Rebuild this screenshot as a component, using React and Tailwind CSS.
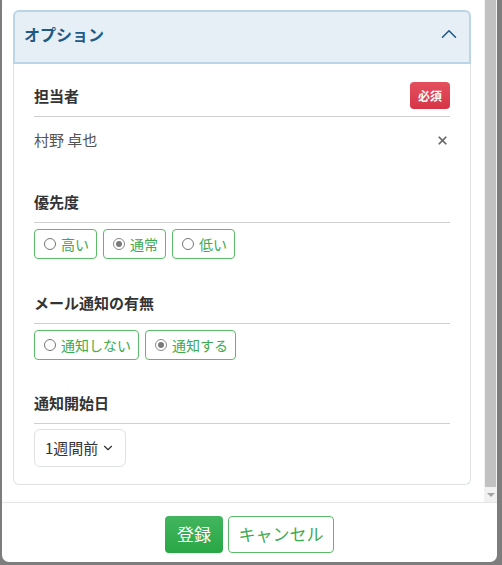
import { ChevronUp, ChevronDown, X } from "lucide-react";

const jp = { fontFamily: '"Noto Sans CJK JP", "Noto Sans", sans-serif' };

function Radio({ checked }) {
  return (
    <span
      className={`w-[12px] h-[12px] rounded-full border flex items-center justify-center bg-white ${
        checked ? "border-[#8a8a8a]" : "border-[#767676]"
      }`}
    >
      {checked && <span className="w-[6px] h-[6px] rounded-full bg-[#7a7a7a]" />}
    </span>
  );
}

function Choice({ label, checked }) {
  return (
    <label className="h-[30px] flex items-center gap-[5px] pl-[9px] pr-[7px] border-[1.5px] border-[#5bbb68] rounded-[4px] text-[14px] text-[#3daa4f] leading-none">
      <Radio checked={checked} />
      <span>{label}</span>
    </label>
  );
}

function SectionLabel({ children, badge }) {
  return (
    <div className="pb-[7px] border-b border-[#cfcfcf]">
      <div className="h-[27px] flex items-center justify-between">
        <span className="text-[15px] font-bold text-[#333] leading-none -mt-[1px]">{children}</span>
        {badge && (
          <span className="h-[27px] w-[40px] rounded-[4px] bg-gradient-to-b from-[#e4505e] to-[#d63447] text-white text-[12px] font-bold flex items-center justify-center">
            {badge}
          </span>
        )}
      </div>
    </div>
  );
}

export default function App() {
  return (
    <div className="w-[502px] h-[565px] bg-[#7d7d7d] overflow-hidden" style={jp}>
      <div className="ml-[2px] w-[495px] h-[562px] bg-white rounded-b-[7px] flex flex-col overflow-hidden">
        {/* scrolling body */}
        <div className="h-[502px] flex">
          <div className="flex-1 pt-[10px] pl-[11px] pr-[13px]">
            <div className="rounded-[6px]">
              <div className="h-[54px] bg-[#e6eff6] border-2 border-[#bad5e5] rounded-t-[6px] flex items-center justify-between pl-[9px] pr-[7px] pb-[6px]">
                <span className="text-[16px] font-bold text-[#1d5a88]">オプション</span>
                <ChevronUp size={26} strokeWidth={1.4} className="text-[#1d5a88]" />
              </div>
              <div className="border border-t-0 border-[#dee2e6] rounded-b-[6px] px-[20px] pt-[18px] pb-[17px]">
                <SectionLabel badge="必須">担当者</SectionLabel>
                <div className="mt-[12px] h-[22px] flex items-center justify-between">
                  <span className="text-[15px] text-[#555]">村野 卓也</span>
                  <X size={13} strokeWidth={3.2} className="text-[#666] mr-[1px]" />
                </div>

                <div className="mt-[37px]">
                  <SectionLabel>優先度</SectionLabel>
                  <div className="mt-[6px] flex gap-[6px]">
                    <Choice label="高い" />
                    <Choice label="通常" checked />
                    <Choice label="低い" />
                  </div>
                </div>

                <div className="mt-[30px]">
                  <SectionLabel>メール通知の有無</SectionLabel>
                  <div className="mt-[6px] flex gap-[6px]">
                    <Choice label="通知しない" />
                    <Choice label="通知する" checked />
                  </div>
                </div>

                <div className="mt-[29px]">
                  <SectionLabel>通知開始日</SectionLabel>
                  <div className="mt-[5px] inline-flex h-[38px] items-center gap-[3px] pl-[10px] pr-[10px] border-[1.5px] border-[#dee2e6] rounded-[6px] text-[15px] text-[#333]">
                    <span>1週間前</span>
                    <ChevronDown size={14} strokeWidth={2} className="text-[#333]" />
                  </div>
                </div>
              </div>
            </div>
          </div>
          {/* scrollbar */}
          <div className="w-[13px] bg-[#f1f1f1] flex flex-col">
            <div className="h-[487px] mx-[1px] bg-[#c1c1c1]" />
            <div className="flex-1 flex items-center justify-center">
              <span className="w-0 h-0 border-l-[4px] border-r-[4px] border-t-[4px] border-l-transparent border-r-transparent border-t-[#a3a3a3]" />
            </div>
          </div>
        </div>

        {/* footer */}
        <div className="flex-1 border-t border-[#e5e5e5] flex items-center justify-center gap-[5px] pt-[3px]">
          <button className="h-[37px] w-[58px] rounded-[4px] bg-gradient-to-b from-[#41b55e] to-[#28a745] text-white text-[17px]">
            登録
          </button>
          <button className="h-[37px] w-[106px] rounded-[4px] border-[1.5px] border-[#5bbb68] bg-white text-[#3daa4f] text-[17px]">
            キャンセル
          </button>
        </div>
      </div>
    </div>
  );
}
